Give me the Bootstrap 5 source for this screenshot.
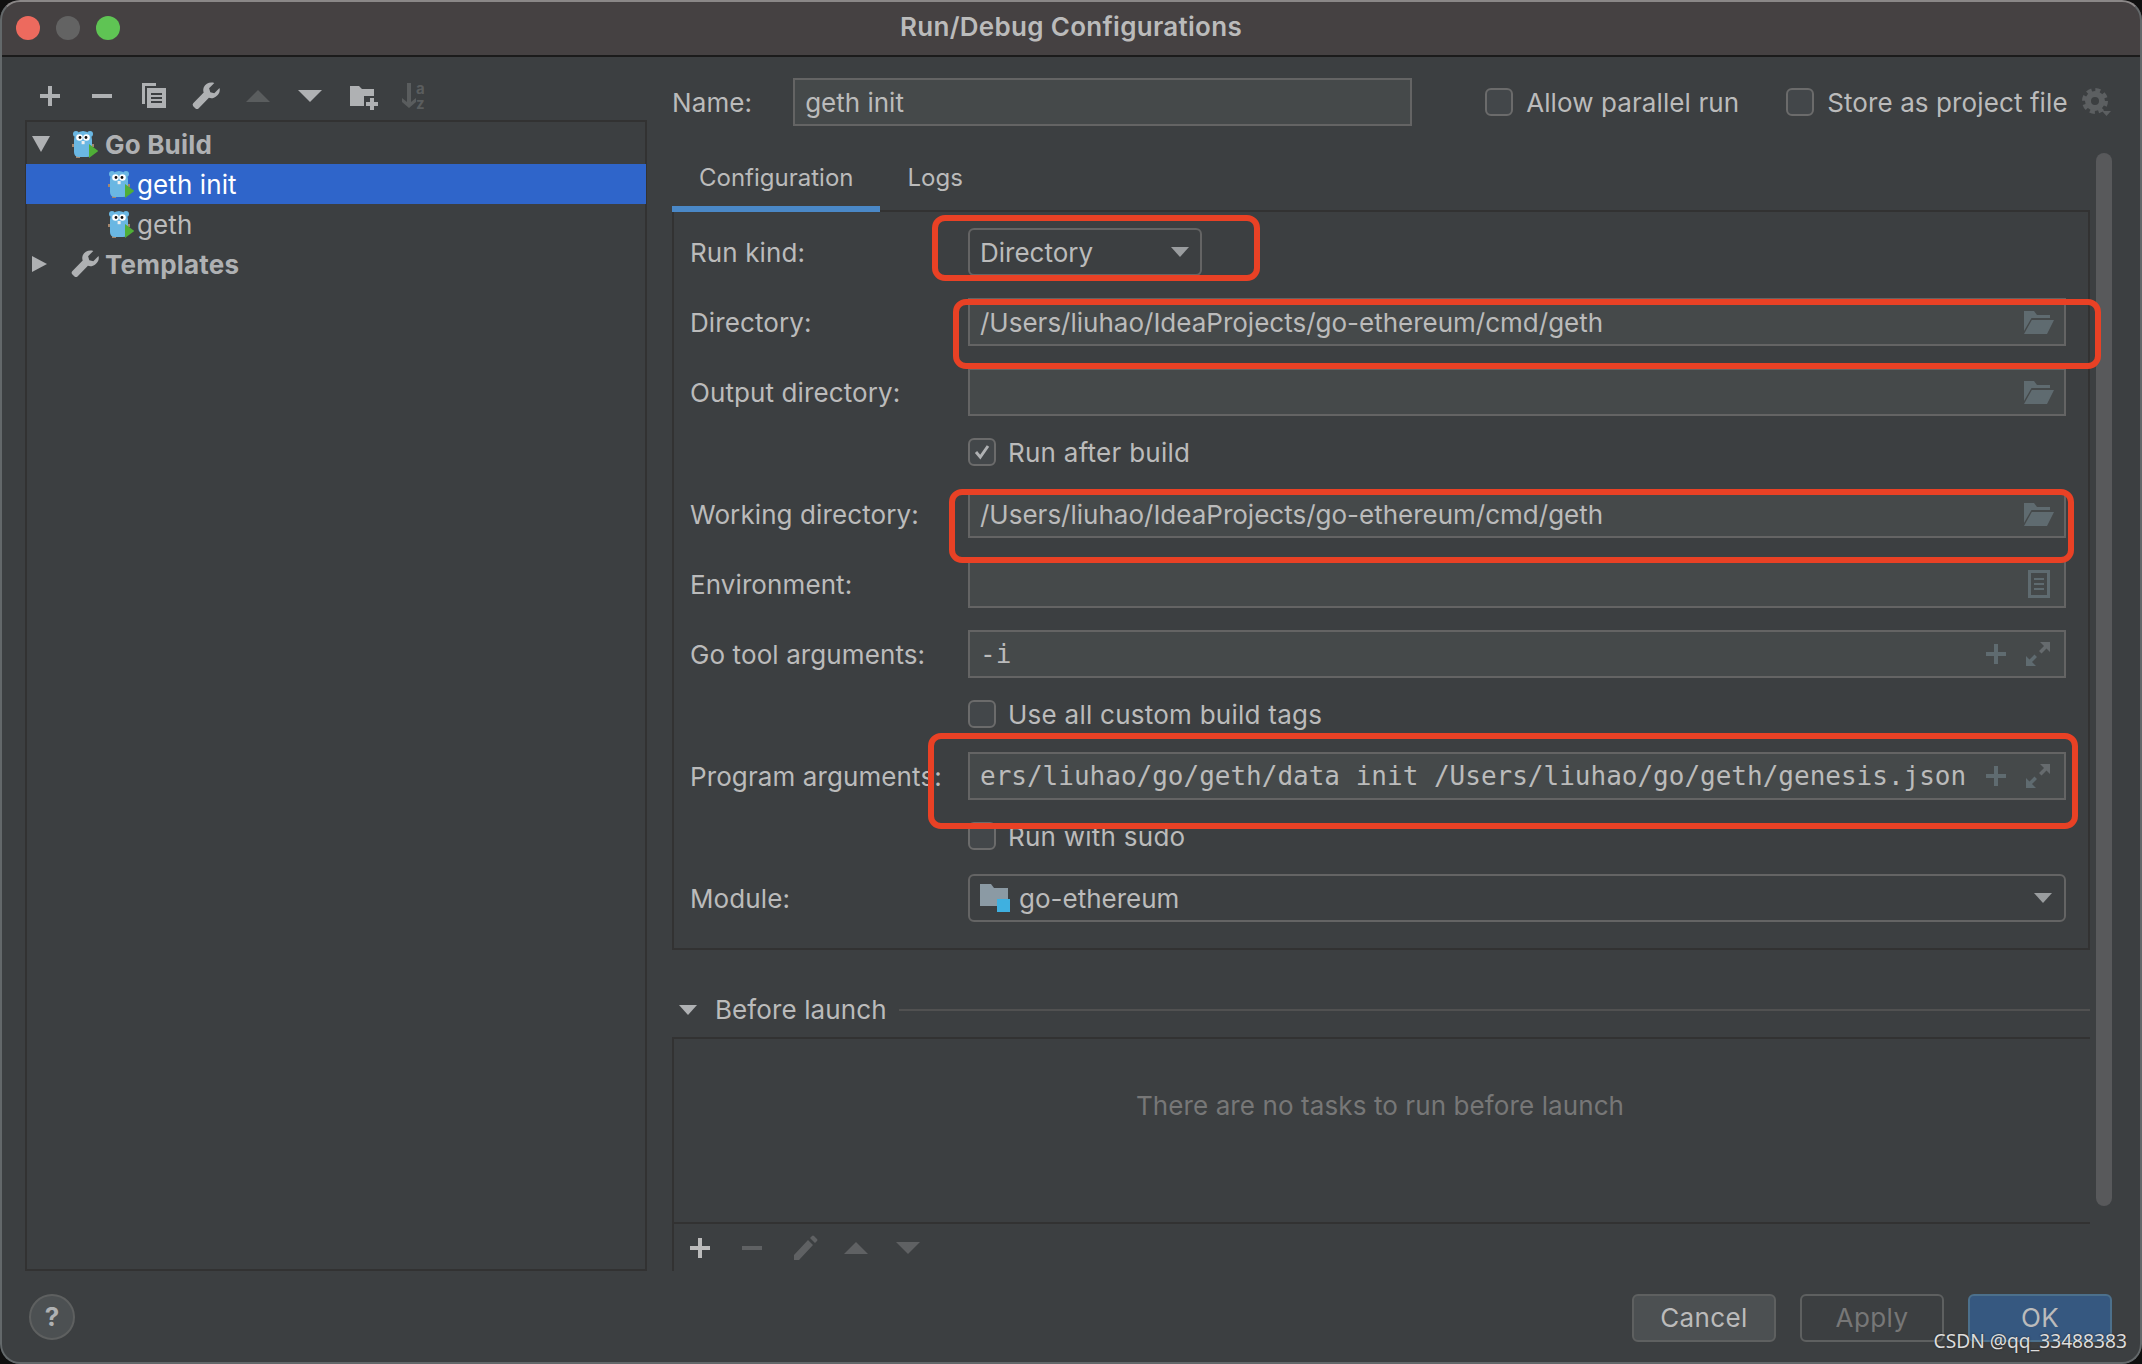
<!DOCTYPE html>
<html lang="en">
<head>
    <meta charset="UTF-8">
    <meta name="viewport" content="width=device-width, initial-scale=1.0">
    <title>Run/Debug Configurations</title>
    <link href="https://cdn.jsdelivr.net/npm/bootstrap@5.3.0/dist/css/bootstrap.min.css" rel="stylesheet">
    <style>
        html, body { height: 100%; overflow: hidden; }
        body {
            background: #101010;
            font-family: "Inter", "Liberation Sans", sans-serif;
            font-size: 26px;
            letter-spacing: 0.1px;
            color: #bbbbbb;
        }
        .ij-win {
            position: relative;
            width: 2142px;
            height: 1364px;
            background: #3c3f41;
            border-radius: 20px;
            overflow: hidden;
        }
        .ij-win::after {
            content: "";
            position: absolute;
            inset: 0;
            border: 2px solid #63686a;
            border-top-color: #8a8787;
            border-radius: 20px;
            pointer-events: none;
        }

        /* Title bar */
        .ij-titlebar {
            height: 57px;
            background: #454142;
            border-bottom: 2px solid #1b1b1b;
            position: relative;
        }
        .ij-light { width: 24px; height: 24px; border-radius: 50%; }
        .ij-lights { padding-left: 16px; padding-top: 16px; gap: 16px; }
        .ij-title {
            position: absolute;
            left: 0; right: 0; top: 9px;
            text-align: center;
            font-weight: 600;
            line-height: 36px;
            letter-spacing: 0.3px;
        }

        /* Left column */
        .ij-main { height: 1214px; }
        .ij-left { width: 647px; padding-left: 25px; flex: none; }
        .ij-tools { height: 63px; padding: 23px 0 0 9px; gap: 20px; }
        .ij-tools svg, .ij-subtools svg { width: 32px; height: 32px; flex: none; }
        .ij-tree {
            height: 1151px;
            border: 2px solid #323232;
            padding-top: 2px;
            border-radius: 0;
        }
        .ij-node.list-group-item {
            height: 40px;
            padding: 0 0 0 5px;
            background: transparent;
            border: 0;
            border-radius: 0;
            color: #bbbbbb;
            display: flex;
            align-items: center;
        }
        .ij-node svg { flex: none; }
        .ij-node-root { font-weight: 700; letter-spacing: 0.2px; color: #afb1b3 !important; }
        .ij-node-child.list-group-item { padding-left: 81px; gap: 3px; }
        .ij-node-sel.list-group-item { background: #2f65ca; color: #ffffff; margin: 0 -1px; width: calc(100% + 2px); padding-left: 82px; }
        .ij-arrow { width: 18px; margin-right: 22px; }
        .ij-gopher { width: 26px; height: 28px; }
        .ij-tree-wrench { width: 32px; height: 32px; margin: 0 -3px; }
        .ij-label-gap { margin-left: 7px; }

        /* Right column */
        .ij-right { margin-left: 25px; width: 1470px; flex: none; }
        .ij-namerow { height: 89px; padding-top: 21px; }
        .ij-namerow .ij-field { width: 619px; margin-left: 41px; flex: none; }
        .ij-body { height: 1125px; }
        .ij-content { width: 1418px; flex: none; }

        .ij-field.form-control {
            height: 48px;
            display: flex;
            align-items: center;
            padding: 0 10px 0 10px;
            font-size: 26px;
            letter-spacing: 0;
            color: #bbbbbb;
            background: #45494a;
            border: 2px solid #646464;
            border-radius: 0;
            flex-grow: 1;
            min-width: 0;
        }
        .ij-field svg { flex: none; }
        .ij-mono { font-family: "DejaVu Sans Mono", "Liberation Mono", monospace; letter-spacing: 0; }
        .ij-combo.form-control { background: #3c3f41; border-radius: 6px; }
        .ij-kind.form-control { width: 234px; flex: none; flex-grow: 0; padding-right: 11px; }

        .ij-box.form-check-input {
            width: 28px;
            height: 28px;
            margin: 0;
            flex: none;
            background-color: #43474a;
            border: 2px solid #6b6b6b;
            border-radius: 6px;
        }
        .ij-box.form-check-input:checked {
            background-color: #43474a;
            border-color: #6b6b6b;
            --bs-form-check-bg-image: url("data:image/svg+xml,%3csvg xmlns='http://www.w3.org/2000/svg' viewBox='0 0 28 28'%3e%3cpath fill='none' stroke='%23afb1b3' stroke-width='3.4' d='M7 14l5 6 9-13'/%3e%3c/svg%3e");
            background-size: 100%;
        }
        .ij-tabs.nav-tabs {
            height: 66px;
            border-bottom: 2px solid #323232;
            flex-wrap: nowrap;
        }
        .ij-tabs .nav-link {
            height: 66px;
            margin: 0;
            padding: 16px 27px 0;
            border: 0;
            border-radius: 0;
            background: transparent;
            color: #bbbbbb;
            font-size: 24px;
            letter-spacing: 0;
            line-height: 32px;
        }
        .ij-tabs .nav-link.active {
            background: transparent;
            color: #bbbbbb;
            border-bottom: 6px solid #4a88c7;
        }
        .ij-panel {
            border: 2px solid #323232;
            border-top: 0;
            padding: 16px 22px 26px 16px;
            gap: 22px;
        }
        .ij-lab { width: 278px; flex: none; }
        .ij-rowtext { margin-left: 13px; }
        .ij-checkrow { height: 28px; margin-bottom: 2px; }
        .ij-checkrow .ij-rowtext { margin-left: 12px; letter-spacing: 0.25px; }

        .ij-before-head { height: 87px; padding: 40px 0 0 7px; }
        .ij-before-head .ij-rule { height: 2px; background: #515151; flex-grow: 1; margin-left: 12px; }
        .ij-before-head span { margin-left: 18px; }
        .ij-before {
            height: 234px;
            border-left: 2px solid #323232;
            border-top: 2px solid #323232;
        }
        .ij-empty { height: 183px; padding: 47px 4px 0 0; line-height: 39px; color: #777777; }
        .ij-subtools { height: 49px; border-top: 2px solid #323232; padding-left: 10px; gap: 20px; }

        .ij-track { width: 28px; padding: 7px 6px 65px; }
        .ij-thumb { width: 16px; height: 100%; background: #58595b; border-radius: 8px; }

        /* Footer */
        .ij-footer { padding: 23px 30px 0 29px; }
        .ij-help {
            width: 46px; height: 46px; padding: 0;
            border-radius: 50%;
            font-weight: 700;
            font-size: 26px;
            color: #afb1b3;
            background: #4c5052;
            border: 2px solid #5e6060;
            line-height: 40px;
        }
        .ij-btn.btn {
            width: 144px; height: 48px; padding: 0 0 2px;
            font-size: 26px;
            border-radius: 6px;
            border: 2px solid #5e6060;
            color: #bbbbbb;
            background: #4c5052;
            letter-spacing: 0.4px;
        }
        .ij-btn-off.btn { background: transparent; color: #777777; opacity: 1; }
        .ij-btn-ok.btn { background: #365880; border-color: #4c708c; color: #bbbbbb; }

        /* Red annotations drawn over the screenshot */
        .ij-red {
            position: absolute;
            border: 6px solid #e94125;
            border-radius: 13px;
            pointer-events: none;
        }
        .ij-red-a { left: 932px; top: 215px; width: 328px; height: 66px; }
        .ij-red-b { left: 953px; top: 299px; width: 1148px; height: 70px; }
        .ij-red-c { left: 949px; top: 489px; width: 1125px; height: 74px; }
        .ij-red-d { left: 928px; top: 733px; width: 1150px; height: 96px; }
        .ij-watermark {
            position: absolute;
            right: 15px;
            top: 1327px;
            font-size: 19.2px;
            line-height: 28px;
            letter-spacing: 0;
            color: #dddddd;
            font-family: "Noto Sans", sans-serif;
            text-shadow: 0 0 2px #222222;
        }
    </style>
</head>
<body>
    <!-- shared icons -->
    <svg class="d-none">
        <symbol id="gopher" viewBox="0 0 26 28">
            <circle cx="4" cy="4" r="3" fill="#6ab7e3"/>
            <circle cx="18" cy="4" r="3" fill="#6ab7e3"/>
            <rect x="0" y="14" width="3" height="3" fill="#a5866c"/>
            <rect x="19" y="14" width="3" height="3" fill="#a5866c"/>
            <rect x="4" y="25" width="4" height="3" fill="#a5866c"/>
            <path d="M2 10a9 9 0 0 1 18 0V22q0 5-5 5H7q-5 0-5-5z" fill="#6ab7e3"/>
            <circle cx="7.5" cy="7.5" r="3.3" fill="#fff"/>
            <circle cx="14.5" cy="7.5" r="3.3" fill="#fff"/>
            <circle cx="8" cy="7.5" r="1.4" fill="#111"/>
            <circle cx="14" cy="7.5" r="1.4" fill="#111"/>
            <rect x="9.6" y="11" width="3" height="3.2" fill="#eee"/>
            <path d="M17 14l9.5 7L17 28z" fill="#4fae37"/>
        </symbol>
        <symbol id="i-plus" viewBox="0 0 32 32"><path d="M14 6h4v8h8v4h-8v8h-4v-8H6v-4h8z"/></symbol>
        <symbol id="i-minus" viewBox="0 0 32 32"><path d="M6 14h20v4H6z"/></symbol>
        <symbol id="i-up" viewBox="0 0 32 32"><path d="M4 22L16 10l12 12z"/></symbol>
        <symbol id="i-down" viewBox="0 0 32 32"><path d="M4 10h24L16 22z"/></symbol>
        <symbol id="i-wrench" viewBox="0 0 32 32"><path d="M29.5 8l-5.2 5.200-4-1-1.200-4 5.200-5.200c-4-1.300-8.800.2-10.500 4.200-.8 2-.7 3.800-.1 5.400L3.200 23.200q-1.200 1.500 0 3l2.300 2.300q1.500 1.100 3 0L18.900 17.800c1.600.6 3.400.6 5-.1 4.100-1.700 6.800-5.600 5.600-9.700z"/></symbol>
        <symbol id="i-openfolder" viewBox="0 0 30 23"><path d="M0 0h10l3 4h13v3H7.500L0 20zM7.800 9H30l-7 14H0z"/></symbol>
        <symbol id="i-expand" viewBox="0 0 24 24"><path d="M14 0h10v10l-3.500-3.500-5 5-2.500-2.500 5-5z" fill="#666b6e"/><path d="M0 24V14l3.500 3.500 5-5 2.500 2.500-5 5L10 24z" fill="#5f6b70"/></symbol>
        <symbol id="i-combo" viewBox="0 0 18 10"><path d="M0 0h18L9 10z"/></symbol>
    </svg>

    <div class="ij-win d-flex flex-column">
        <!-- Title bar -->
        <div class="ij-titlebar">
            <div class="ij-lights d-flex">
                <div class="ij-light" style="background:#ed6a5e"></div>
                <div class="ij-light" style="background:#636363"></div>
                <div class="ij-light" style="background:#5fc454"></div>
            </div>
            <div class="ij-title">Run/Debug Configurations</div>
        </div>

        <div class="ij-main d-flex">
            <!-- Configuration tree -->
            <div class="ij-left">
                <div class="ij-tools d-flex">
                    <svg fill="#afb1b3"><use href="#i-plus"/></svg>
                    <svg fill="#afb1b3"><use href="#i-minus"/></svg>
                    <svg fill="#afb1b3" viewBox="0 0 32 32"><path d="M4 3h14v3H7v18H4z"/><path d="M9 8h19v20H9z"/><path d="M13 13h11v2H13zM13 17h11v2H13zM13 21h11v2H13z" fill="#3c3f41"/></svg>
                    <svg fill="#afb1b3"><use href="#i-wrench"/></svg>
                    <svg fill="#5a5d5e"><use href="#i-up"/></svg>
                    <svg fill="#afb1b3"><use href="#i-down"/></svg>
                    <svg fill="#afb1b3" viewBox="0 0 32 32" overflow="visible"><path d="M4 6h9l3 3h12v7H18v10H4z"/><path d="M24 18h4v4h4v4h-4v4h-4v-4h-4v-4h4z"/></svg>
                    <svg fill="#5a5d5e" viewBox="0 0 32 32"><path d="M9 3h4v19l5-4v4l-7 6-7-6v-4l5 4z"/><text x="18" y="14" font-size="15" font-weight="700" font-family="Inter, sans-serif">a</text><text x="18" y="29" font-size="15" font-weight="700" font-family="Inter, sans-serif">z</text></svg>
                </div>
                <ul class="ij-tree list-group">
                    <li class="ij-node ij-node-root list-group-item">
                        <svg class="ij-arrow" height="16" viewBox="0 0 18 16" fill="#afb1b3"><path d="M0 0h18L9 16z"/></svg>
                        <svg class="ij-gopher"><use href="#gopher"/></svg>
                        <span class="ij-label-gap">Go Build</span>
                    </li>
                    <li class="ij-node ij-node-child ij-node-sel list-group-item">
                        <svg class="ij-gopher"><use href="#gopher"/></svg>
                        <span>geth init</span>
                    </li>
                    <li class="ij-node ij-node-child list-group-item">
                        <svg class="ij-gopher"><use href="#gopher"/></svg>
                        <span>geth</span>
                    </li>
                    <li class="ij-node ij-node-root list-group-item">
                        <svg class="ij-arrow" height="16" viewBox="0 0 18 16" fill="#afb1b3"><path d="M0 0l15 8L0 16z"/></svg>
                        <svg class="ij-tree-wrench" fill="#afb1b3"><use href="#i-wrench"/></svg>
                        <span class="ij-label-gap">Templates</span>
                    </li>
                </ul>
            </div>

            <!-- Settings -->
            <div class="ij-right">
                <div class="ij-namerow d-flex align-items-start">
                    <div class="d-flex align-items-center">
                        <span>Name:</span>
                        <div class="ij-field form-control">geth init</div>
                    </div>
                    <div class="d-flex align-items-center" style="height:48px;margin-left:73px">
                        <input class="ij-box form-check-input" type="checkbox">
                        <span class="ij-rowtext">Allow parallel run</span>
                        <input class="ij-box form-check-input" type="checkbox" style="margin-left:47px">
                        <span class="ij-rowtext">Store as project file</span>
                        <svg width="30" height="30" viewBox="0 0 30 30" fill="none" style="margin-left:14px">
                            <circle cx="13" cy="14" r="7" stroke="#5c5f61" stroke-width="6"/>
                            <circle cx="13" cy="14" r="11" stroke="#5c5f61" stroke-width="4" stroke-dasharray="5 3.640"/>
                            <path d="M20 24h9l-4.500 5z" fill="#5c5f61"/>
                        </svg>
                    </div>
                </div>

                <div class="ij-body d-flex">
                    <div class="ij-content">
                        <ul class="ij-tabs nav nav-tabs">
                            <li class="nav-item"><a class="nav-link active" href="#">Configuration</a></li>
                            <li class="nav-item"><a class="nav-link" href="#">Logs</a></li>
                        </ul>
                        <div class="ij-panel d-flex flex-column">
                            <div class="d-flex align-items-center">
                                <span class="ij-lab">Run kind:</span>
                                <div class="ij-field ij-combo ij-kind form-control justify-content-between">
                                    <span>Directory</span>
                                    <svg width="18" height="10" fill="#9a9d9f"><use href="#i-combo"/></svg>
                                </div>
                            </div>
                            <div class="d-flex align-items-center">
                                <span class="ij-lab">Directory:</span>
                                <div class="ij-field form-control justify-content-between">
                                    <span>/Users/liuhao/IdeaProjects/go-ethereum/cmd/geth</span>
                                    <svg width="30" height="23" fill="#5f6b70"><use href="#i-openfolder"/></svg>
                                </div>
                            </div>
                            <div class="d-flex align-items-center">
                                <span class="ij-lab">Output directory:</span>
                                <div class="ij-field form-control justify-content-end">
                                    <svg width="30" height="23" fill="#5f6b70"><use href="#i-openfolder"/></svg>
                                </div>
                            </div>
                            <div class="ij-checkrow d-flex align-items-center">
                                <span class="ij-lab"></span>
                                <input class="ij-box form-check-input" type="checkbox" checked>
                                <span class="ij-rowtext">Run after build</span>
                            </div>
                            <div class="d-flex align-items-center">
                                <span class="ij-lab">Working directory:</span>
                                <div class="ij-field form-control justify-content-between">
                                    <span>/Users/liuhao/IdeaProjects/go-ethereum/cmd/geth</span>
                                    <svg width="30" height="23" fill="#5f6b70"><use href="#i-openfolder"/></svg>
                                </div>
                            </div>
                            <div class="d-flex align-items-center">
                                <span class="ij-lab">Environment:</span>
                                <div class="ij-field form-control justify-content-end">
                                    <svg width="22" height="28" viewBox="0 0 22 28" fill="none" stroke="#5f6b70" stroke-width="3" style="margin-right:4px"><path d="M1.500 1.500h19v25h-19z"/><path d="M6 9h10M6 14h10M6 19h10" stroke-width="2"/></svg>
                                </div>
                            </div>
                            <div class="d-flex align-items-center">
                                <span class="ij-lab">Go tool arguments:</span>
                                <div class="ij-field form-control">
                                    <span class="ij-mono flex-grow-1">-i</span>
                                    <svg width="32" height="32" fill="#5f6b70"><use href="#i-plus"/></svg>
                                    <svg width="24" height="24" style="margin-left:14px;margin-right:4px"><use href="#i-expand"/></svg>
                                </div>
                            </div>
                            <div class="ij-checkrow d-flex align-items-center">
                                <span class="ij-lab"></span>
                                <input class="ij-box form-check-input" type="checkbox">
                                <span class="ij-rowtext">Use all custom build tags</span>
                            </div>
                            <div class="d-flex align-items-center">
                                <span class="ij-lab">Program arguments:</span>
                                <div class="ij-field form-control">
                                    <span class="ij-mono flex-grow-1">ers/liuhao/go/geth/data init /Users/liuhao/go/geth/genesis.json</span>
                                    <svg width="32" height="32" fill="#5f6b70"><use href="#i-plus"/></svg>
                                    <svg width="24" height="24" style="margin-left:14px;margin-right:4px"><use href="#i-expand"/></svg>
                                </div>
                            </div>
                            <div class="ij-checkrow d-flex align-items-center">
                                <span class="ij-lab"></span>
                                <input class="ij-box form-check-input" type="checkbox">
                                <span class="ij-rowtext">Run with sudo</span>
                            </div>
                            <div class="d-flex align-items-center">
                                <span class="ij-lab">Module:</span>
                                <div class="ij-field ij-combo form-control">
                                    <svg width="30" height="28" viewBox="0 0 30 28" style="margin-right:9px">
                                        <path d="M0 0h11l3 4h14v18H0z" fill="#8b9aa4"/>
                                        <path d="M17 15h13v13H17z" fill="#3fb0e0"/>
                                    </svg>
                                    <span class="flex-grow-1">go-ethereum</span>
                                    <svg width="18" height="10" fill="#9a9d9f" style="margin-right:2px"><use href="#i-combo"/></svg>
                                </div>
                            </div>
                        </div>

                        <div class="ij-before-head d-flex align-items-start">
                            <div class="d-flex align-items-center w-100">
                                <svg width="18" height="10" fill="#afb1b3"><use href="#i-combo"/></svg>
                                <span>Before launch</span>
                                <div class="ij-rule"></div>
                            </div>
                        </div>
                        <div class="ij-before">
                            <div class="ij-empty d-flex align-items-start justify-content-center">There are no tasks to run before launch</div>
                            <div class="ij-subtools d-flex align-items-center">
                                <svg fill="#bbbbbb"><use href="#i-plus"/></svg>
                                <svg fill="#5f6163"><use href="#i-minus"/></svg>
                                <svg fill="#5f6163" viewBox="0 0 32 32"><path d="M6 23L20 8l5 5-14 15H6zM22 6l2-2q1-1 2 0l3 3q1 1 0 2l-2 2z"/></svg>
                                <svg fill="#5f6163"><use href="#i-up"/></svg>
                                <svg fill="#5f6163"><use href="#i-down"/></svg>
                            </div>
                        </div>
                    </div>
                    <div class="ij-track"><div class="ij-thumb"></div></div>
                </div>
            </div>
        </div>

        <!-- Footer buttons -->
        <div class="ij-footer d-flex justify-content-between">
            <button class="ij-help btn" type="button">?</button>
            <div class="d-flex gap-4">
                <button class="ij-btn btn" type="button">Cancel</button>
                <button class="ij-btn ij-btn-off btn" type="button">Apply</button>
                <button class="ij-btn ij-btn-ok btn" type="button">OK</button>
            </div>
        </div>

        <div class="ij-red ij-red-a"></div>
        <div class="ij-red ij-red-b"></div>
        <div class="ij-red ij-red-c"></div>
        <div class="ij-red ij-red-d"></div>
        <div class="ij-watermark">CSDN @qq_33488383</div>
    </div>

    <script src="https://cdn.jsdelivr.net/npm/bootstrap@5.3.0/dist/js/bootstrap.bundle.min.js"></script>
</body>
</html>
